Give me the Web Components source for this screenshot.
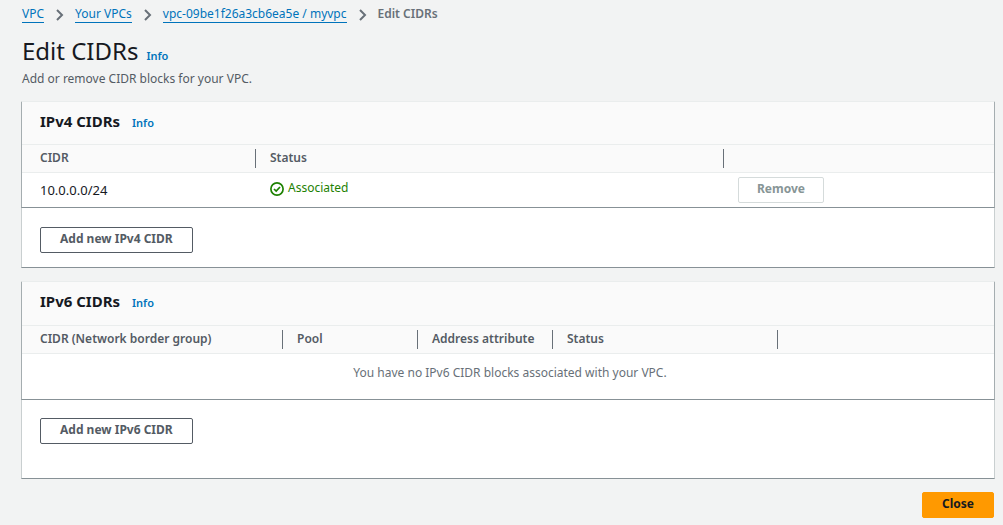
<!DOCTYPE html>
<html lang="en">
<head>
<meta charset="utf-8">
<meta name="viewport" content="width=device-width, initial-scale=1">
<title>Edit CIDRs</title>
<style>
  body {
    margin: 0;
    background: #f2f3f3;
    color: #16191f;
    font: 13px/20px "Noto Sans", "Open Sans", sans-serif;
    --link: #0073bb;
    --muted: #545b64;
    --line: #eaeded;
    --edge: #879196;
  }
</style>
</head>
<body>
<edit-cidrs-page></edit-cidrs-page>

<script>
function define(name, markup) {
  const template = document.createElement('template');
  template.innerHTML = markup;
  customElements.define(name, class extends HTMLElement {
    constructor() {
      super();
      this.attachShadow({ mode: 'open' }).append(template.content.cloneNode(true));
      const button = this.shadowRoot.querySelector('button');
      if (button) button.disabled = this.hasAttribute('disabled');
    }
  });
}

define('ui-button', `
  <style>
    :host { display: inline-block; vertical-align: top; }
    button {
      display: block; box-sizing: border-box; height: 26px; margin: 0; padding: 0 19px 2px;
      font: inherit; font-size: 12px; font-weight: 700; line-height: 20px;
      color: var(--muted); background: #fff; border: 1px solid var(--muted); border-radius: 2px;
      cursor: pointer; white-space: nowrap;
    }
    button:disabled { padding: 0 18px 2px; color: #879596; border-color: #d5dbdb; cursor: default; }
    :host([primary]) button { color: #16191f; background: #ff9900; border-color: #ff9900; }
  </style>
  <button type="button"><slot></slot></button>`);

define('info-link', `
  <style>
    :host { display: inline; }
    a { color: var(--link); font-size: 11px; font-weight: 600; line-height: 16px; text-decoration: none; }
  </style>
  <a href="#info">Info</a>`);

define('crumb-item', `
  <style>
    :host { display: flex; align-items: center; }
    a { color: var(--link); text-decoration: none; border-bottom: 1px solid; line-height: 16px; }
    svg { display: block; margin: 2px 11px 0; }
  </style>
  <a href="#"><slot></slot></a>
  <svg width="9" height="12" viewBox="0 0 9 12" fill="none" stroke="#687078" stroke-width="2" aria-hidden="true"><path d="M2 1l5 5-5 5"/></svg>`);

define('crumb-trail', `
  <style>
    :host { display: block; }
    nav { display: flex; align-items: center; height: 28px; font-size: 12px; }
  </style>
  <nav aria-label="Breadcrumbs"><slot></slot></nav>`);

define('status-ok', `
  <style>
    :host { display: inline-flex; align-items: center; gap: 4px; color: #1d8102; }
    svg { display: block; margin-top: 2px; }
  </style>
  <svg width="14" height="14" viewBox="0 0 14 14" fill="none" stroke="currentColor" stroke-width="1.7" aria-hidden="true"><circle cx="7" cy="7" r="6.1"/><path d="M4 7l2.2 2.1L10 5"/></svg>
  <slot></slot>`);

define('cidr-panel', `
  <style>
    :host {
      display: block; background: #fff; border: 1px solid #c9cfd0;
      border-top-color: var(--line); border-bottom-color: var(--edge);
    }
    header { display: flex; align-items: baseline; gap: 12px; height: 42px; padding: 0 18px; box-sizing: border-box; background: #fafafa; line-height: 38px; }
    :host([tall]) header { height: 43px; }
    .table { margin: 0 -1px; border: 1px solid #a5adb0; border-top: 0; border-bottom-color: var(--edge); }
    .actions { padding: 19px 18px 14px; }
    :host([tall]) .actions { padding: 18px 18px 34px; }
  </style>
  <div class="table">
    <header><slot name="title"></slot><info-link></info-link></header>
    <slot name="table"></slot>
  </div>
  <div class="actions"><slot name="actions"></slot></div>`);

const tableStyle = `
    :host { display: block; }
    table { width: 100%; table-layout: fixed; border-collapse: separate; border-spacing: 0; }
    th { height: 27px; padding: 0; text-align: left; background: #fafafa; border: solid var(--line); border-width: 1px 0; font-size: 12px; font-weight: 600; line-height: 18px; color: var(--muted); vertical-align: middle; }
    th div { height: 19px; padding-left: 14px; border-right: 1px solid #687078; white-space: nowrap; }
    th:first-child div { padding-left: 18px; }
    th:last-child div { border: 0; }
    td { padding: 0 14px; }
    td:first-child { padding-left: 18px; }`;

define('ipv4-table', `
  <style>${tableStyle}
    td { height: 34px; font-size: 12px; }
    td:first-child { font-size: 13px; }
  </style>
  <table aria-label="IPv4 CIDRs">
    <colgroup><col style="width:234px"><col style="width:468px"><col></colgroup>
    <thead><tr><th><div>CIDR</div></th><th><div>Status</div></th><th><div></div></th></tr></thead>
    <tbody><tr><td>10.0.0.0/24</td><td><status-ok>Associated</status-ok></td><td><ui-button disabled>Remove</ui-button></td></tr></tbody>
  </table>`);

define('ipv6-table', `
  <style>${tableStyle}
    td { height: 45px; box-sizing: border-box; padding-bottom: 8px; text-align: center; font-size: 12px; color: #687078; }
  </style>
  <table aria-label="IPv6 CIDRs">
    <colgroup><col style="width:261px"><col style="width:135px"><col style="width:135px"><col style="width:225px"><col></colgroup>
    <thead><tr><th><div>CIDR (Network border group)</div></th><th><div>Pool</div></th><th><div>Address attribute</div></th><th><div>Status</div></th><th><div></div></th></tr></thead>
    <tbody><tr><td colspan="5">You have no IPv6 CIDR blocks associated with your VPC.</td></tr></tbody>
  </table>`);

define('edit-cidrs-page', `
  <style>
    :host { display: block; padding: 0 8px 7px 21px; }
    crumb-trail, .intro { margin-left: 1px; }
    .current { font-weight: 600; color: #687078; }
    .heading { display: flex; align-items: baseline; gap: 8px; }
    h1 { margin: 0; font-size: 24px; font-weight: 400; line-height: 46px; }
    .heading { height: 41px; }
    p { margin: 0 0 12px; font-size: 12px; color: var(--muted); }
    h2 { margin: 0; font-size: 15px; font-weight: 700; }
    cidr-panel { margin-bottom: 13px; }
    footer { display: flex; justify-content: flex-end; padding-right: 1px; }
  </style>
  <crumb-trail>
    <crumb-item>VPC</crumb-item>
    <crumb-item>Your VPCs</crumb-item>
    <crumb-item>vpc-09be1f26a3cb6ea5e / myvpc</crumb-item>
    <span class="current" aria-current="page">Edit CIDRs</span>
  </crumb-trail>
  <main>
    <div class="intro">
      <div class="heading"><h1>Edit CIDRs</h1><info-link></info-link></div>
      <p>Add or remove CIDR blocks for your VPC.</p>
    </div>
    <cidr-panel>
      <h2 slot="title">IPv4 CIDRs</h2>
      <ipv4-table slot="table"></ipv4-table>
      <ui-button slot="actions">Add new IPv4 CIDR</ui-button>
    </cidr-panel>
    <cidr-panel tall>
      <h2 slot="title">IPv6 CIDRs</h2>
      <ipv6-table slot="table"></ipv6-table>
      <ui-button slot="actions">Add new IPv6 CIDR</ui-button>
    </cidr-panel>
    <footer><ui-button primary>Close</ui-button></footer>
  </main>`);
</script>
</body>
</html>
